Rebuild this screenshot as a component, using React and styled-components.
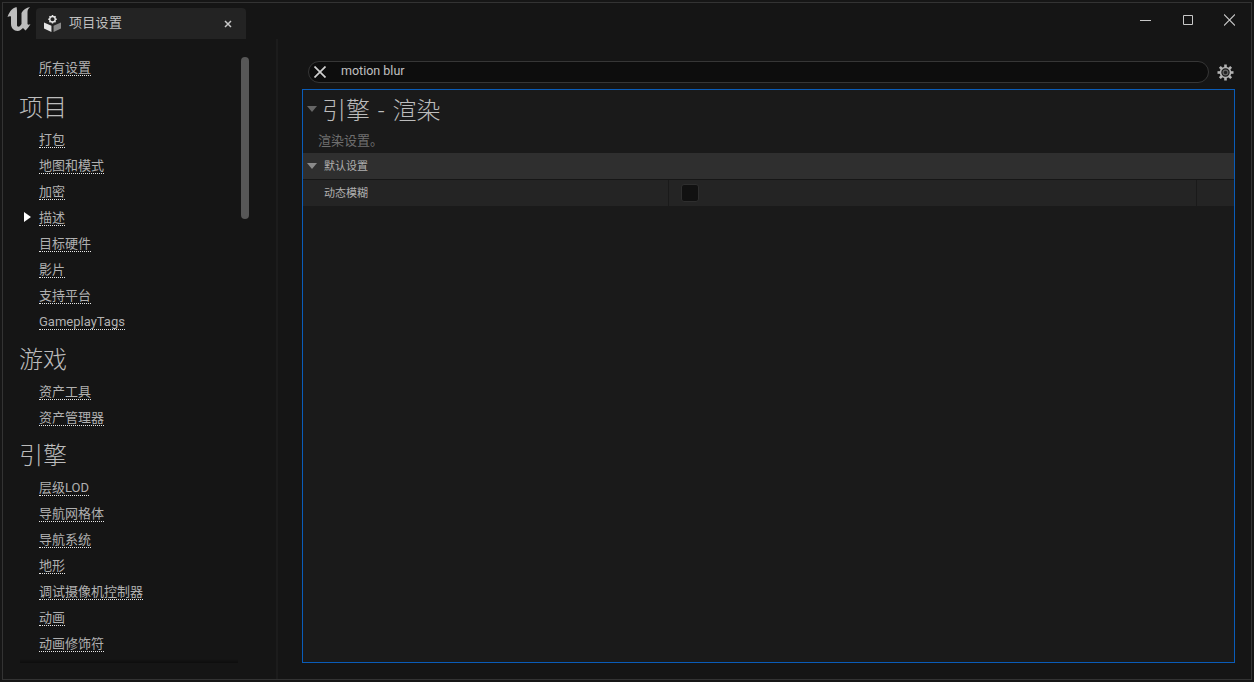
import styled, { createGlobalStyle } from "styled-components"

const GlobalStyle = createGlobalStyle`
  html, body {
    margin: 0;
    padding: 0;
    background: #161616;
  }
  * { box-sizing: border-box; }
`;

const Page = styled.div`
  width: 1254px;
  height: 682px;
  padding: 2px;
  overflow: hidden;
  font-family: Roboto, "Noto Sans CJK SC", sans-serif;
`;
const Frame = styled.div`
  width: 1250px;
  height: 678px;
  border: 1px solid #333;
  background: #151515;
  display: flex;
  flex-direction: column;
`;
const TitleBar = styled.div`
  height: 36px;
  flex-shrink: 0;
  display: flex;
  align-items: flex-end;
  padding-left: 4px;
`;
const Logo = styled.svg`
  width: 24px;
  height: 24px;
  margin-bottom: 8px;
  margin-right: 5px;
  flex-shrink: 0;
`;
const Tab = styled.div`
  width: 210px;
  height: 31px;
  background: #232323;
  border-radius: 4px 4px 0 0;
  display: flex;
  align-items: center;
  padding: 0 14px 0 8px;
  color: #c0c0c0;
  font-size: 13px;
`;
const TabIcon = styled.svg`
  width: 17px;
  height: 17px;
  margin-right: 8px;
`;
const TabLabel = styled.span`
  flex: 1;
  letter-spacing: 0.3px;
  line-height: 16px;
  margin-top: -2px;
`;
const TabClose = styled.svg`
  width: 8px;
  height: 8px;
`;
const WindowButtons = styled.div`
  margin-left: auto;
  align-self: flex-start;
  display: flex;
  margin-top: 11px;
  margin-right: 16px;
  gap: 31px;
`;
const WinIcon = styled.svg`
  width: 11px;
  height: 12px;
  display: block;
`;
const Body = styled.div`
  flex: 1;
  display: flex;
  min-height: 0;
`;
const Sidebar = styled.div`
  width: 275px;
  flex-shrink: 0;
  border-right: 2px solid #1c1c1c;
  position: relative;
  padding: 15px 0 0 16px;
  overflow: hidden;
`;
const Scrollbar = styled.div`
  position: absolute;
  left: 238px;
  top: 18px;
  width: 8px;
  height: 162px;
  border-radius: 4px;
  background: #575757;
`;
const BottomShadow = styled.div`
  position: absolute;
  left: 17px;
  top: 620px;
  width: 218px;
  height: 4px;
  background: linear-gradient(#151515, #0d0d0d);
`;
const Item = styled.div`
  height: 26px;
  display: flex;
  align-items: center;
  padding-left: 20px;
  position: relative;
  font-size: 13px;
  color: #b0b0b0;
  margin-bottom: ${(p) => (p.$gap ? "2px" : "0")};
`;
const ItemText = styled.span`
  line-height: 18px;
  height: 17px;
  border-bottom: 1px dotted #e8e8e8;
`;
const Marker = styled.div`
  position: absolute;
  left: 5px;
  top: 8px;
  width: 0;
  height: 0;
  border-left: 7px solid #fff;
  border-top: 5px solid transparent;
  border-bottom: 5px solid transparent;
`;
const Heading = styled.div`
  height: 44px;
  padding-top: 2px;
  display: flex;
  align-items: center;
  font-size: 24px;
  font-weight: 300;
  color: #bcbcbc;
`;
const Main = styled.div`
  flex: 1;
  min-width: 0;
  padding: 22px 16px 16px 24px;
  display: flex;
  flex-direction: column;
`;
const SearchRow = styled.div`
  display: flex;
  align-items: center;
  height: 22px;
  margin-left: 6px;
  margin-bottom: 6px;
  flex-shrink: 0;
`;
const SearchBox = styled.div`
  width: 901px;
  height: 22px;
  border: 1px solid #363636;
  border-radius: 11px;
  background: #0d0d0d;
  display: flex;
  align-items: center;
  padding-left: 5px;
  color: #c0c0c0;
  font-size: 12.5px;
`;
const SearchText = styled.span`
  line-height: 16px;
  margin-top: -2px;
`;
const ClearIcon = styled.svg`
  width: 12px;
  height: 12px;
  margin-right: 15px;
`;
const GearIcon = styled.svg`
  width: 17px;
  height: 17px;
  margin-left: 8px;
`;
const Panel = styled.div`
  flex: 1;
  min-height: 0;
  border: 1px solid #0a5cb8;
  background: #1a1a1a;
`;
const PanelHead = styled.div`
  height: 36px;
  display: flex;
  align-items: center;
  padding-left: 4px;
  font-size: 24px;
  font-weight: 300;
  word-spacing: 2px;
  color: #bcbcbc;
`;
const Arrow = styled.div`
  width: 0;
  height: 0;
  margin-right: ${(p) => p.$mr}px;
  margin-top: 1px;
  border-top: 6px solid ${(p) => p.$color};
  border-left: 5.5px solid transparent;
  border-right: 5.5px solid transparent;
`;
const Description = styled.div`
  height: 26px;
  margin-top: 1px;
  padding: 0 0 2px 15px;
  font-size: 13px;
  color: #6f6f6f;
  display: flex;
  align-items: center;
`;
const Category = styled.div`
  height: 27px;
  background: #2f2f2f;
  border-bottom: 1px solid #161616;
  display: flex;
  align-items: center;
  padding: 0 0 2px 4px;
  font-size: 11px;
  color: #b0b0b0;
`;
const Row = styled.div`
  height: 26px;
  background: #242424;
  display: grid;
  grid-template-columns: 366px 528px 1fr;
  font-size: 11px;
  color: #b0b0b0;
`;
const Cell = styled.div`
  display: flex;
  align-items: center;
  padding-left: ${(p) => p.$pad || 0}px;
  padding-bottom: ${(p) => (p.$label ? 2 : 0)}px;
  border-right: ${(p) => (p.$line ? "1px solid #1a1a1a" : "none")};
`;
const Checkbox = styled.div`
  width: 18px;
  height: 18px;
  background: #111;
  border: 1px solid #2e2e2e;
  border-radius: 3px;
`;

const sections = [
  { title: "项目", items: ["打包", "地图和模式", "加密", "描述", "目标硬件", "影片", "支持平台", "GameplayTags"] },
  { title: "游戏", items: ["资产工具", "资产管理器"] },
  { title: "引擎", items: ["层级LOD", "导航网格体", "导航系统", "地形", "调试摄像机控制器", "动画", "动画修饰符"] },
];

const teeth = [0, 45, 90, 135, 180, 225, 270, 315];

const App = () => {
  return (
    <Page>
      <GlobalStyle />
      <Frame>
        <TitleBar>
          <Logo viewBox="0 0 24 24">
            <path
              fill="#bdbdbd"
              d="M9.5 0C6 1 3 3 .5 10 2 9 3 9 4 9.5L4 17C4 21 7 24 10.5 24 13 24 14.5 22.5 16 21L18.5 23.5C20 22 22 20 23.5 17 22 18 21 18 20.5 17L20.5 5C20.5 3 21.5 1.5 23 0 19.5 1 16 2.5 14.5 6L14.5 17 13 19C12 20 10.5 20 10 18.5L10 5C10 3 10 1.5 9.5 0Z"
            />
          </Logo>
          <Tab>
            <TabIcon viewBox="0 0 16 16">
              <path fill="#e4e4e4" d="M0 7l7 3.2V16l-7-3.4z" />
              <path fill="#8a8a8a" d="M16 7l-7 3.2V16l7-3.4z" />
              <circle cx="8" cy="4" r="2.6" fill="none" stroke="#e4e4e4" strokeWidth="1.3" />
              {teeth.map((a) => (
                <rect key={a} x="7.3" y="0" width="1.4" height="1.6" fill="#e4e4e4" transform={`rotate(${a} 8 4)`} />
              ))}
            </TabIcon>
            <TabLabel>项目设置</TabLabel>
            <TabClose viewBox="0 0 8 8">
              <path stroke="#c8c8c8" strokeWidth="1.5" d="M1 1l6 6M7 1L1 7" />
            </TabClose>
          </Tab>
          <WindowButtons>
            <WinIcon viewBox="0 0 11 12">
              <path stroke="#c8c8c8" d="M0 6.5h11" />
            </WinIcon>
            <WinIcon viewBox="0 0 11 12">
              <path fill="none" stroke="#c8c8c8" d="M1.5 1.5h9v9h-9z" />
            </WinIcon>
            <WinIcon viewBox="0 0 11 12">
              <path stroke="#c8c8c8" strokeWidth="1.1" d="M0 .5l11 11M11 .5L0 11.5" />
            </WinIcon>
          </WindowButtons>
        </TitleBar>
        <Body>
          <Sidebar>
            <Scrollbar />
            <Item $gap>
              <ItemText>所有设置</ItemText>
            </Item>
            {sections.map((section) => (
              <div key={section.title}>
                <Heading>{section.title}</Heading>
                {section.items.map((name) => (
                  <Item key={name}>
                    {name === "描述" && <Marker />}
                    <ItemText>{name}</ItemText>
                  </Item>
                ))}
              </div>
            ))}
            <BottomShadow />
          </Sidebar>
          <Main>
            <SearchRow>
              <SearchBox>
                <ClearIcon viewBox="0 0 12 12">
                  <path stroke="#d0d0d0" strokeWidth="1.7" d="M.5.5l11 11M11.5.5l-11 11" />
                </ClearIcon>
                <SearchText>motion blur</SearchText>
              </SearchBox>
              <GearIcon viewBox="0 0 17 17">
                {teeth.map((a) => (
                  <rect key={a} x="7.2" y="0.5" width="2.6" height="3" fill="#b4b4b4" transform={`rotate(${a} 8.5 8.5)`} />
                ))}
                <circle cx="8.5" cy="8.5" r="5" fill="#1a1a1a" stroke="#b4b4b4" strokeWidth="1.6" />
                <circle cx="8.5" cy="8.5" r="2.4" fill="#222" stroke="#666" strokeWidth="1.3" />
              </GearIcon>
            </SearchRow>
            <Panel>
              <PanelHead>
                <Arrow $color="#666" $mr={5} />
                引擎 - 渲染
              </PanelHead>
              <Description>渲染设置。</Description>
              <Category>
                <Arrow $color="#8a8a8a" $mr={7} />
                默认设置
              </Category>
              <Row>
                <Cell $pad={21} $line $label>
                  动态模糊
                </Cell>
                <Cell $pad={12} $line>
                  <Checkbox />
                </Cell>
                <Cell />
              </Row>
            </Panel>
          </Main>
        </Body>
      </Frame>
    </Page>
  )
}

export default App
